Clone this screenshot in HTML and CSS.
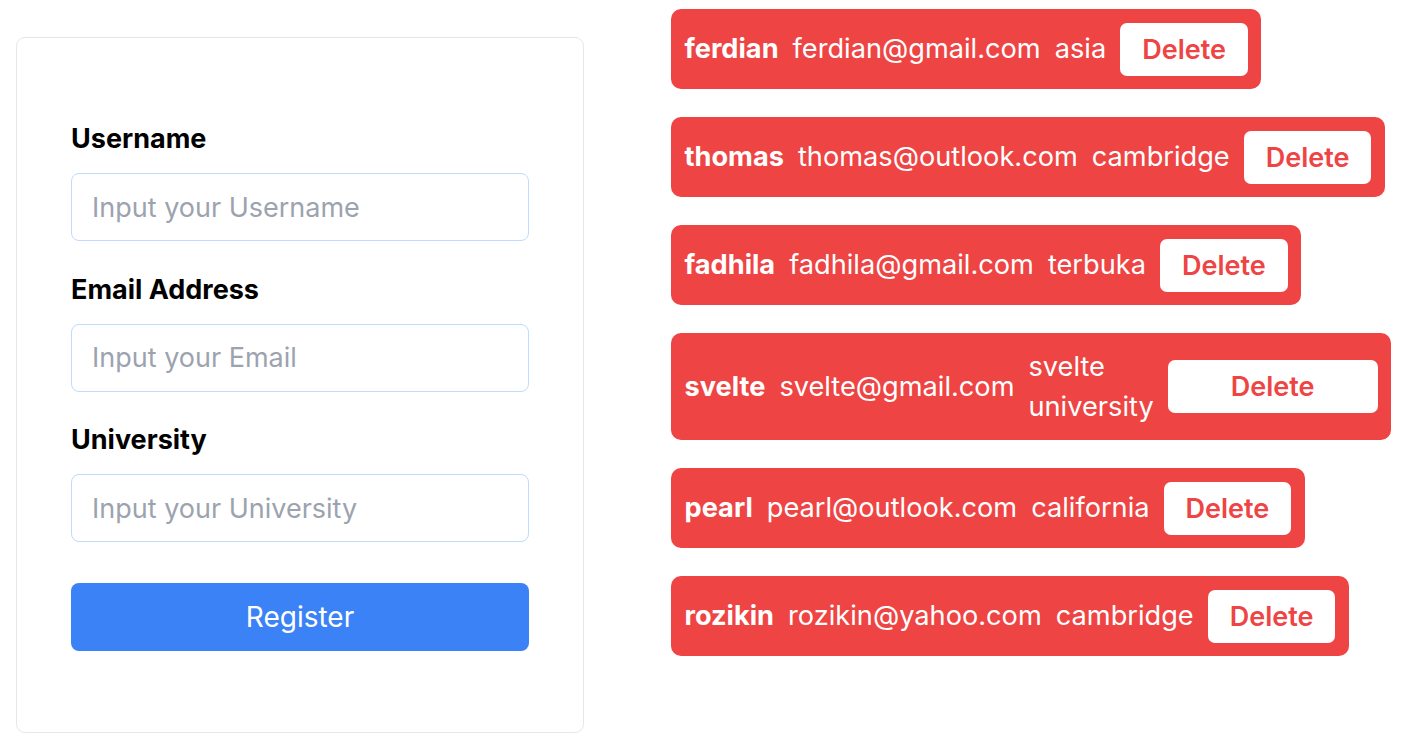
FILE: index.html
```html
<!DOCTYPE html>
<html lang="en">
<head>
<meta charset="utf-8">
<title>Register</title>
<link rel="stylesheet" href="styles.css">
</head>
<body>
<main class="page">
  <form class="form-card">
    <div class="field">
      <label class="label" for="username">Username</label>
      <input class="input" id="username" type="text" placeholder="Input your Username">
    </div>
    <div class="field">
      <label class="label" for="email">Email Address</label>
      <input class="input" id="email" type="email" placeholder="Input your Email">
    </div>
    <div class="field">
      <label class="label" for="university">University</label>
      <input class="input" id="university" type="text" placeholder="Input your University">
    </div>
    <button class="register" type="button">Register</button>
  </form>

  <ul class="users">
    <li class="user">
      <span class="name">ferdian</span>
      <span class="email">ferdian@gmail.com</span>
      <span class="loc">asia</span>
      <button class="del" type="button">Delete</button>
    </li>
    <li class="user">
      <span class="name">thomas</span>
      <span class="email">thomas@outlook.com</span>
      <span class="loc">cambridge</span>
      <button class="del" type="button">Delete</button>
    </li>
    <li class="user">
      <span class="name">fadhila</span>
      <span class="email">fadhila@gmail.com</span>
      <span class="loc">terbuka</span>
      <button class="del" type="button">Delete</button>
    </li>
    <li class="user user-wide">
      <span class="name">svelte</span>
      <span class="email">svelte@gmail.com</span>
      <span class="loc">svelte university</span>
      <button class="del" type="button">Delete</button>
    </li>
    <li class="user">
      <span class="name">pearl</span>
      <span class="email">pearl@outlook.com</span>
      <span class="loc">california</span>
      <button class="del" type="button">Delete</button>
    </li>
    <li class="user">
      <span class="name">rozikin</span>
      <span class="email">rozikin@yahoo.com</span>
      <span class="loc">cambridge</span>
      <button class="del" type="button">Delete</button>
    </li>
  </ul>
</main>
</body>
</html>
```

FILE: styles.css
```css
* { box-sizing: border-box; }

html, body {
  margin: 0;
  background: #ffffff;
}

body {
  font-family: Inter, "Noto Sans", "Liberation Sans", sans-serif;
  color: #000;
}

.page {
  display: flex;
  align-items: flex-start;
  gap: 87px;
  padding: 9px 0 0 16px;
}

.form-card {
  width: 568px;
  margin: 28px 0 0 0;
  padding: 81px 54px 81px;
  border: 1px solid #e5e7eb;
  border-radius: 9px;
  display: flex;
  flex-direction: column;
}

.field {
  display: flex;
  flex-direction: column;
  margin-bottom: 28.5px;
}

.field:last-of-type {
  margin-bottom: 40.5px;
}

.label {
  font-size: 27px;
  line-height: 40.5px;
  font-weight: 700;
  margin-bottom: 13.5px;
}

.input {
  height: 68px;
  width: 100%;
  padding: 0 20px;
  font-family: inherit;
  font-size: 27px;
  color: #111827;
  border: 1px solid #bfdbfe;
  border-radius: 8px;
  outline: none;
  background: #fff;
}

.input::placeholder {
  color: #9ca3af;
}

.register {
  height: 68px;
  width: 100%;
  border: 0;
  border-radius: 8px;
  background: #3b82f6;
  color: #fff;
  font-family: inherit;
  font-size: 28px;
}

.users {
  list-style: none;
  margin: 0;
  padding: 0;
  display: flex;
  flex-direction: column;
  align-items: flex-start;
  gap: 28px;
}

.user {
  display: flex;
  align-items: center;
  gap: 14px;
  padding: 13.5px;
  background: #ef4444;
  color: #fff;
  border-radius: 10px;
  font-size: 27.2px;
  line-height: 40px;
}

.name { font-weight: 700; }

.del {
  height: 53px;
  padding: 0 22px;
  border: 0;
  border-radius: 7px;
  background: #fff;
  color: #ef4444;
  font-family: inherit;
  font-size: 27px;
  font-weight: 600;
}

.user-wide { width: 720px; }
.user-wide .loc { width: min-content; }
.user-wide .del { flex: 1; }
```
